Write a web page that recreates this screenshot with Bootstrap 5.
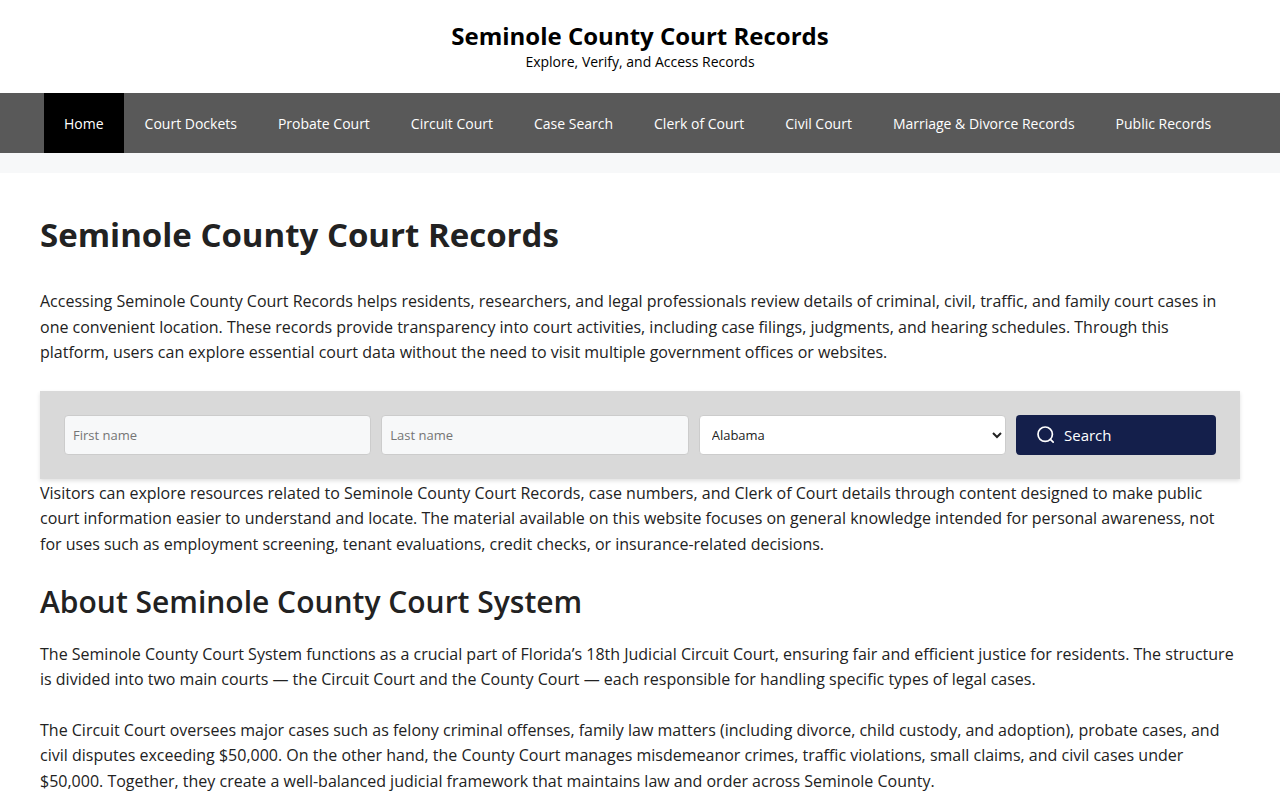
<!DOCTYPE html>
<html lang="en">
<head>
<meta charset="utf-8">
<meta name="viewport" content="width=device-width, initial-scale=1">
<title>Seminole County Court Records</title>
<link href="https://cdn.jsdelivr.net/npm/bootstrap@5.3.0/dist/css/bootstrap.min.css" rel="stylesheet">
<script src="https://cdn.jsdelivr.net/npm/bootstrap@5.3.0/dist/js/bootstrap.bundle.min.js" defer></script>
<style>
  body { font-family: "Segoe UI", "Open Sans", sans-serif; font-size: 16px; line-height: 1.6; color: #222; background: #f7f8f9; }
  .wrap { max-width: 1200px; margin: 0 auto; }
  .site-head { padding: 20px 0 21px; color: #000; }
  .site-name { font-size: 24px; font-weight: 700; line-height: 32px; color: #000; }
  .tagline { font-size: 14px; line-height: 20px; }
  .main-nav { background: #595959; margin-bottom: 20px; }
  .main-nav .nav { column-gap: 1px; }
  .main-nav .nav-link { font-size: 14px; line-height: 58px; padding: 2px 20px 0; color: #fff; white-space: nowrap; }
  .main-nav .nav-link.active { background: #000; color: #fff; }
  .content { padding: 40px 0; }
  h1 { font-size: 33px; font-weight: 700; line-height: 44px; margin: 0 0 32px; }
  h2 { font-size: 30px; font-weight: 600; line-height: 38px; margin: 0 0 21px; }
  .content p { margin: 0 0 25px; }
  .finder { background: #d9d9d9; padding: 24px; gap: 10px; margin-bottom: 2px; box-shadow: 0 2px 4px rgba(0,0,0,.12); }
  .finder .form-control, .finder .pick { font-size: 13px; height: 40px; border: 1px solid #ccc; border-radius: 4px; color: #222; }
  .finder .form-control { background: #f7f8f9; padding: 0 8px; }
  .finder .form-control::placeholder { color: #757575; }
  .finder .pick { background: #fff; padding: 0 8px; min-width: 0; }
  .go { width: 200px; height: 40px; border: 0; border-radius: 4px; background: #141f4b; color: #fff; font-size: 15px; padding: 0 20px; }
  .go:hover { background: #22306b; color: #fff; }
</style>
</head>
<body>
<header class="site-head bg-white text-center">
  <a href="#" class="site-name d-block text-decoration-none">Seminole County Court Records</a>
  <div class="tagline">Explore, Verify, and Access Records</div>
</header>
<nav class="main-nav">
  <ul class="nav wrap px-1">
    <li class="nav-item"><a class="nav-link active" href="#">Home</a></li>
    <li class="nav-item"><a class="nav-link" href="#">Court Dockets</a></li>
    <li class="nav-item"><a class="nav-link" href="#">Probate Court</a></li>
    <li class="nav-item"><a class="nav-link" href="#">Circuit Court</a></li>
    <li class="nav-item"><a class="nav-link" href="#">Case Search</a></li>
    <li class="nav-item"><a class="nav-link" href="#">Clerk of Court</a></li>
    <li class="nav-item"><a class="nav-link" href="#">Civil Court</a></li>
    <li class="nav-item"><a class="nav-link" href="#">Marriage &amp; Divorce Records</a></li>
    <li class="nav-item"><a class="nav-link" href="#">Public Records</a></li>
  </ul>
</nav>
<main class="bg-white">
  <div class="content wrap">
    <h1>Seminole County Court Records</h1>
    <p>Accessing Seminole County Court Records helps residents, researchers, and legal professionals review details of criminal, civil, traffic, and family court cases in <br>one convenient location. These records provide transparency into court activities, including case filings, judgments, and hearing schedules. Through this <br>platform, users can explore essential court data without the need to visit multiple government offices or websites.</p>
    <form class="finder d-flex">
      <input class="form-control" type="text" placeholder="First name" aria-label="First name">
      <input class="form-control" type="text" placeholder="Last name" aria-label="Last name">
      <select class="pick w-100" aria-label="State"><option>Alabama</option><option>Alaska</option><option>Arizona</option><option>Florida</option></select>
      <button class="go btn d-flex align-items-center gap-2 flex-shrink-0" type="button">
        <svg width="20" height="20" viewBox="0 0 20 20" fill="none" stroke="#fff" stroke-width="1.7" stroke-linecap="round" aria-hidden="true"><circle cx="9.2" cy="9.2" r="7.2"/><path d="M14.4 14.4 17.2 17.2"/></svg>
        <span>Search</span>
      </button>
    </form>
    <p>Visitors can explore resources related to Seminole County Court Records, case numbers, and Clerk of Court details through content designed to make public <br>court information easier to understand and locate. The material available on this website focuses on general knowledge intended for personal awareness, not <br>for uses such as employment screening, tenant evaluations, credit checks, or insurance-related decisions.</p>
    <h2>About Seminole County Court System</h2>
    <p>The Seminole County Court System functions as a crucial part of Florida’s 18th Judicial Circuit Court, ensuring fair and efficient justice for residents. The structure <br>is divided into two main courts — the Circuit Court and the County Court — each responsible for handling specific types of legal cases.</p>
    <p>The Circuit Court oversees major cases such as felony criminal offenses, family law matters (including divorce, child custody, and adoption), probate cases, and <br>civil disputes exceeding $50,000. On the other hand, the County Court manages misdemeanor crimes, traffic violations, small claims, and civil cases under <br>$50,000. Together, they create a well-balanced judicial framework that maintains law and order across Seminole County.</p>
  </div>
</main>
</body>
</html>
